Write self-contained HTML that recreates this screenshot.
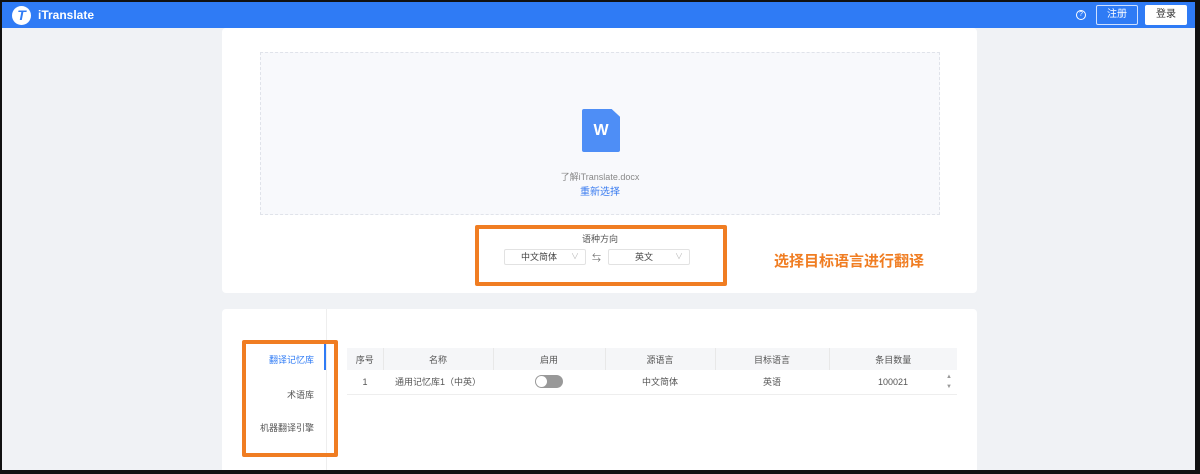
<!DOCTYPE html>
<html><head><meta charset="utf-8"><style>
*{margin:0;padding:0;box-sizing:border-box}
body{width:1200px;height:474px;overflow:hidden;background:#111;font-family:"Liberation Sans","Noto Sans CJK SC",sans-serif;position:relative}
.frame{position:absolute;left:2px;top:2px;width:1193px;height:468px;background:#f0f2f5;overflow:hidden}
.top{position:absolute;left:0;top:0;width:100%;height:26px;background:#2f7bf5}
.logo{position:absolute;left:10px;top:4px;width:19px;height:19px;border-radius:50%;background:#fff;color:#2f7bf5;font-weight:bold;font-size:14px;text-align:center;line-height:19px;font-style:italic}
.title{position:absolute;left:36px;top:6px;color:#fff;font-size:12px;font-weight:bold}
.help{position:absolute;left:1074px;top:8px;width:10px;height:10px;border:1px solid #fff;border-radius:50%;color:#fff;font-size:7px;text-align:center;line-height:8px}
.reg{position:absolute;left:1094px;top:3px;width:42px;height:20px;border:1px solid #cfe0ff;border-radius:2px;color:#fff;font-size:10px;text-align:center;line-height:18px}
.login{position:absolute;left:1143px;top:3px;width:42px;height:20px;background:#fff;border-radius:2px;color:#333;font-size:10px;text-align:center;line-height:20px}
.card{position:absolute;background:#fff;border-radius:4px}
.drop{position:absolute;left:258px;top:50px;width:680px;height:163px;background:#f8f9fc;border:1px dashed #e0e3ea}
.doc{position:absolute;left:321px;top:56px;width:38px;height:43px;background:#4e8ef6;border-radius:2px;color:#fff;font-weight:bold;font-size:16px;text-align:center;line-height:43px;clip-path:polygon(0 0,78% 0,100% 18%,100% 100%,0 100%)}
.fn{position:absolute;width:100%;top:117px;text-align:center;font-size:9px;color:#888}
.re{position:absolute;width:100%;top:130px;text-align:center;font-size:10px;color:#3a7cf0}
.ob{position:absolute;border:4px solid #f07d22;border-radius:2px}
.sel{position:absolute;height:16px;border:1px solid #e2e2e2;border-radius:2px;font-size:9px;color:#444;line-height:14px}
.sel span{position:absolute;right:6px;color:#bbb;font-size:8px}
.hint{position:absolute;left:772px;top:248px;color:#f07d22;font-size:15px;font-weight:bold}
table{position:absolute;left:345px;top:346px;width:610px;border-collapse:collapse;font-size:9px;color:#555}
th{background:#f5f6f8;font-weight:normal;height:22px;border-right:1px solid #e8e8e8}
td{height:24px;text-align:center;border-bottom:1px solid #eee}
.tog{display:inline-block;width:28px;height:13px;border-radius:7px;background:#999;position:relative;vertical-align:middle}
.tog:after{content:"";position:absolute;left:1px;top:1px;width:11px;height:11px;border-radius:50%;background:#fff}
.tab{position:absolute;font-size:9px;color:#555;text-align:right;width:70px}
</style></head><body>
<div class="frame">
<div class="top"><div class="logo">T</div><div class="title">iTranslate</div><div class="help">?</div><div class="reg">注册</div><div class="login">登录</div></div>
<div class="card" style="left:220px;top:26px;width:755px;height:265px"></div>
<div class="card" style="left:220px;top:307px;width:755px;height:170px"></div>
<div class="drop"><div class="doc">W</div><div class="fn">了解iTranslate.docx</div><div class="re">重新选择</div></div>
<div class="ob" style="left:473px;top:223px;width:252px;height:61px"></div>
<div style="position:absolute;left:580px;top:230px;font-size:9px;color:#555">语种方向</div>
<div class="sel" style="left:502px;top:247px;width:82px;padding-left:16px">中文简体<span>∨</span></div>
<div style="position:absolute;left:590px;top:249px;font-size:9px;color:#777">⇆</div>
<div class="sel" style="left:606px;top:247px;width:82px;padding-left:26px">英文<span>∨</span></div>
<div class="hint">选择目标语言进行翻译</div>
<div style="position:absolute;left:324px;top:307px;width:1px;height:170px;background:#eee"></div>
<div style="position:absolute;left:322px;top:342px;width:2px;height:26px;background:#2f7bf5"></div>
<div class="ob" style="left:240px;top:338px;width:96px;height:117px"></div>
<div class="tab" style="left:242px;top:351px;color:#2f7bf5">翻译记忆库</div>
<div class="tab" style="left:242px;top:386px">术语库</div>
<div class="tab" style="left:242px;top:419px">机器翻译引擎</div>
<table><tr><th style="width:36px">序号</th><th style="width:110px">名称</th><th style="width:112px">启用</th><th style="width:110px">源语言</th><th style="width:114px">目标语言</th><th style="border:0">条目数量</th></tr>
<tr><td>1</td><td>通用记忆库1（中英）</td><td><span class="tog"></span></td><td>中文简体</td><td>英语</td><td>100021</td></tr></table>
<div style="position:absolute;left:944px;top:370px;font-size:6px;color:#999;line-height:10px">▲<br>▼</div>
</div>
</body></html>
